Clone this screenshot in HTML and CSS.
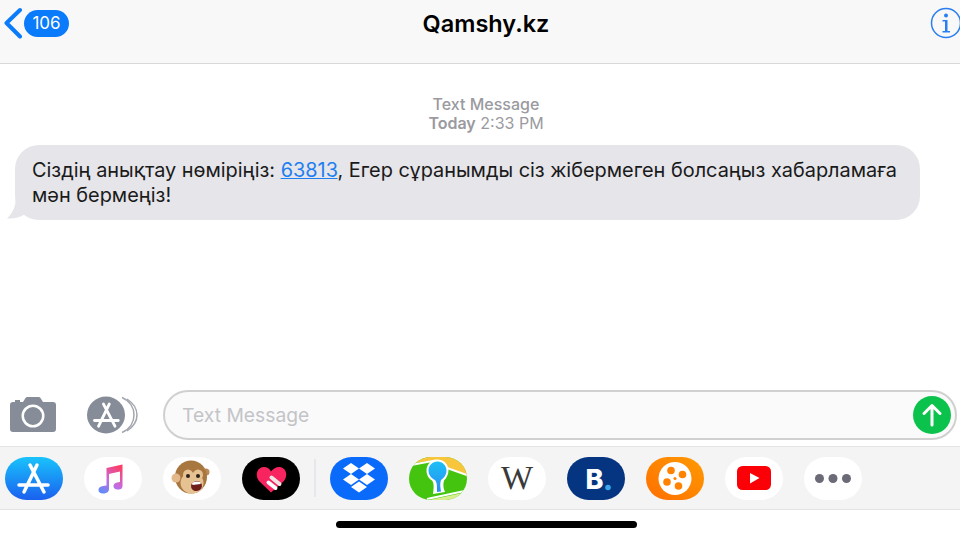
FILE: index.html
```html
<!DOCTYPE html>
<html lang="en">
<head>
<meta charset="UTF-8">
<title>Qamshy.kz</title>
<link rel="stylesheet" href="styles.css">
</head>
<body>

<div class="phone">
    <header class="nav">
        <div class="nav-back">
            <svg class="back-chevron" viewBox="0 0 20 32"><path d="M17 3 L3.500 16 L17 29.500"/></svg>
            <span class="badge">106</span>
        </div>
        <h1 class="nav-title">Qamshy.kz</h1>
        <svg class="info" viewBox="0 0 32 32">
            <circle cx="16" cy="16" r="14.500" class="info-ring"/>
            <circle cx="16" cy="8.500" r="2" class="info-fill"/>
            <path d="M12.500 13 H17.500 V24 H20 V25.500 H12.500 V24 H15 V14.500 H12.500 Z" class="info-fill"/>
        </svg>
    </header>

    <main class="thread">
        <p class="stamp"><span class="stamp-kind">Text Message</span><br><b>Today</b> 2:33 PM</p>
        <div class="bubble">
            Сіздің анықтау нөміріңіз: <a href="#">63813</a>, Егер сұранымды сіз жібермеген болсаңыз хабарламаға мән бермеңіз!
            <svg class="bubble-tail" viewBox="0 0 24 24"><path d="M9 0 C9 10 6 17 0 22.500 C6 23 12 22 18 18 V0 Z"/></svg>
        </div>
    </main>

    <div class="composer">
        <svg class="camera" viewBox="0 0 46 35">
            <path fill-rule="evenodd" d="M3 5 H5 V3 H10 V5 H13 L15.500 1 Q16 0 17.500 0 H28.500 Q30 0 30.500 1 L33 5 H43 Q46 5 46 8 V32 Q46 35 43 35 H3 Q0 35 0 32 V8 Q0 5 3 5 Z M23 7.500 A11.500 11.500 0 1 0 23 30.500 A11.500 11.500 0 1 0 23 7.500 Z M23 10 A9 9 0 1 1 23 28 A9 9 0 1 1 23 10 Z"/>
        </svg>
        <svg class="apps-btn" viewBox="0 0 52 38">
            <path class="apps-echo" d="M35 1.500 C43 5 47 12 47 19 C47 26 43 33 35 36.500"/>
            <path class="apps-echo" d="M40 3 C46 7 50 13 50 19 C50 25 46 31 40 35"/>
            <ellipse cx="19" cy="19" rx="19" ry="18.500" fill="#868d98"/>
            <path class="store-mark" transform="translate(-4 1.500) scale(.82)" d="M25 8 L39 35 M32 8 L19 35 M14 28 H43"/>
        </svg>
        <div class="field">
            <span class="placeholder">Text Message</span>
            <svg class="send" viewBox="0 0 38 38">
                <circle cx="19" cy="19" r="19" fill="#0bc34c"/>
                <path d="M19 29 V9.500 M11 17.500 L19 9.500 L27 17.500" class="send-arrow"/>
            </svg>
        </div>
    </div>

    <nav class="strip">
        <svg class="app" viewBox="0 0 58 43">
            <defs><linearGradient id="storeGrad" x1="0" y1="0" x2="0" y2="1"><stop offset="0" stop-color="#19c3fb"/><stop offset="1" stop-color="#1a60ef"/></linearGradient></defs>
            <rect width="58" height="43" rx="21.500" fill="url(#storeGrad)"/>
            <path class="store-mark" d="M25 8 L39 35 M32 8 L19 35 M14 28 H43"/>
        </svg>
        <svg class="app app-light" viewBox="0 0 58 43">
            <defs><linearGradient id="noteGrad" x1=".7" y1="0" x2=".2" y2="1"><stop offset="0" stop-color="#fb3f68"/><stop offset=".55" stop-color="#c76adf"/><stop offset="1" stop-color="#5d8dfb"/></linearGradient></defs>
            <path fill="url(#noteGrad)" d="M22.500 11 L38.500 7.500 V29 C38.500 32 36 32.500 33.500 32.500 C31 32.500 29.500 31 29.500 29 C29.500 26.500 32 25.500 36 25 V14.500 L25 17 V32 C25 35 22.500 36.500 19 36.500 C16 36.500 14.500 35 14.500 33 C14.500 30 18 28.800 22.500 28.500 Z"/>
        </svg>
        <svg class="app app-light" viewBox="0 0 58 43">
            <circle cx="43" cy="15" r="3.500" fill="#b98a58"/>
            <ellipse cx="28" cy="20" rx="16" ry="16.500" fill="#a8763f"/>
            <circle cx="13" cy="21" r="4.500" fill="#e3b98c"/>
            <ellipse cx="29" cy="26" rx="11.500" ry="10.500" fill="#e6c192"/>
            <ellipse cx="25" cy="18" rx="5" ry="5.500" fill="#e6c192"/>
            <ellipse cx="35" cy="18" rx="5" ry="5.500" fill="#e6c192"/>
            <circle cx="25" cy="19" r="2" fill="#2d2018"/>
            <circle cx="35" cy="19" r="2" fill="#2d2018"/>
            <ellipse cx="33.500" cy="29" rx="5.500" ry="5" fill="#6e1f1c" transform="rotate(-15 33.500 29)"/>
            <path d="M29 26 Q33.500 23.500 38 25.500 L37.500 27 L29.500 28 Z" fill="#fff"/>
        </svg>
        <svg class="app" viewBox="0 0 58 43">
            <rect width="58" height="43" rx="21.500" fill="#000"/>
            <path d="M29 35.500 L17 24 C12 17 16 10 22 10 C25 10 28 12 29 14.500 C31 12 34 10 37 10 C43 10 47 17 42 24 Z" fill="#f8245f"/>
            <path d="M29.500 20.500 L37.500 27" stroke="#f0e4e4" stroke-width="4" stroke-linecap="round"/>
            <path d="M26.500 25.500 L33.500 31" stroke="#fff" stroke-width="4" stroke-linecap="round"/>
        </svg>
        <span class="strip-divider"></span>
        <svg class="app" viewBox="0 0 58 43">
            <rect width="58" height="43" rx="21.500" fill="#0a6bfb"/>
            <path fill="#fff" d="M21 6 L29 11.500 L21 17 L13 11.500 Z M37 6 L45 11.500 L37 17 L29 11.500 Z M21 17 L29 22.500 L21 28 L13 22.500 Z M37 17 L45 22.500 L37 28 L29 22.500 Z M29 24.500 L37 30 L29 35.500 L21 30 Z"/>
        </svg>
        <svg class="app" viewBox="0 0 58 43">
            <defs>
                <clipPath id="mapClip"><rect width="58" height="43" rx="21.500"/></clipPath>
                <linearGradient id="pinGrad" x1="0" y1="0" x2="0" y2="1"><stop offset="0" stop-color="#1cc0f5"/><stop offset="1" stop-color="#2b8df0"/></linearGradient>
            </defs>
            <g clip-path="url(#mapClip)">
                <rect width="58" height="43" fill="#44c40f"/>
                <path d="M6 0 H58 V19 L40 12 L26 3 L6 6 Z" fill="#f8c63c"/>
                <path d="M2 8 L26 3.500 L38 11 L58 18" fill="none" stroke="#fff" stroke-width="2"/>
                <path d="M20 43 L58 35 V43 Z" fill="#d8ef8e"/>
                <path d="M18 42 L58 33.500" stroke="#fff" stroke-width="2"/>
                <path d="M24 37 C25 30 25 26 23 23.500 C19 21 17.500 17 17.500 13.500 C17.500 7 22.500 2.500 28.500 2.500 C34.500 2.500 39.500 7 39.500 13.500 C39.500 17 37.500 21 35 23.500 C34 27 34 31 36 35 Z" fill="#fff"/>
                <path d="M28 35 C28 28 28 25.500 26 23 C22 21 19.500 17.500 19.500 13.500 C19.500 8.500 23.500 4.500 28.500 4.500 C33.500 4.500 37.500 8.500 37.500 13.500 C37.500 17.500 35 21 32 23 C31 26 31 29 32 34.500 Z" fill="url(#pinGrad)"/>
            </g>
        </svg>
        <svg class="app app-light" viewBox="0 0 58 43">
            <text x="29" y="32" class="wiki">W</text>
        </svg>
        <svg class="app" viewBox="0 0 58 43">
            <rect width="58" height="43" rx="21.500" fill="#053580"/>
            <text x="18.500" y="32" class="booking">B</text>
            <circle cx="41" cy="30.500" r="2.800" fill="#3ba6e8"/>
        </svg>
        <svg class="app" viewBox="0 0 58 43">
            <defs><linearGradient id="kinoGrad" x1="0" y1="1" x2="1" y2="0"><stop offset="0" stop-color="#ff6f00"/><stop offset="1" stop-color="#ff9a00"/></linearGradient></defs>
            <rect width="58" height="43" rx="21.500" fill="url(#kinoGrad)"/>
            <circle cx="29" cy="21.500" r="16.500" fill="#fff"/>
            <g fill="#ff8200">
                <circle cx="25" cy="13.500" r="3.800"/>
                <circle cx="36.500" cy="17.500" r="3.800"/>
                <circle cx="21" cy="25" r="3.800"/>
                <circle cx="32.500" cy="29" r="3.800"/>
                <circle cx="29" cy="21.500" r="1.500"/>
            </g>
        </svg>
        <svg class="app app-light" viewBox="0 0 58 43">
            <rect x="12" y="9" width="34" height="24" rx="5.500" fill="#fb0007"/>
            <path d="M25 16 L34.500 21 L25 26.500 Z" fill="#fff"/>
        </svg>
        <svg class="app app-light" viewBox="0 0 58 43">
            <g fill="#6b6b78">
                <circle cx="15.500" cy="21.500" r="4.500"/>
                <circle cx="29" cy="21.500" r="4.500"/>
                <circle cx="42.500" cy="21.500" r="4.500"/>
            </g>
        </svg>
    </nav>

    <div class="home-area">
        <span class="home-bar"></span>
    </div>
</div>

</body>
</html>
```

FILE: styles.css
```css
/* Base */
body {
    margin: 0;
    background: #fff;
    font-family: Inter, "Noto Sans", Roboto, sans-serif;
    color: #111;
}

.phone {
    width: 960px;
    height: 540px;
    display: flex;
    flex-direction: column;
    overflow: hidden;
}

/* Nav bar */
.nav {
    height: 64px;
    flex: none;
    box-sizing: border-box;
    background: #f8f8f8;
    border-bottom: 1px solid #d9d9d9;
    display: flex;
    justify-content: space-between;
    padding: 7px 0 0 3px;
    position: relative;
}

.nav-back {
    display: flex;
    align-items: flex-start;
    gap: 1px;
}

.back-chevron {
    width: 20px;
    height: 32px;
    fill: none;
    stroke: #0a7bfa;
    stroke-width: 4;
    stroke-linecap: round;
    stroke-linejoin: round;
}

.badge {
    background: #0a7bfa;
    color: #fff;
    font-size: 17px;
    line-height: 27px;
    height: 27px;
    width: 45px;
    text-align: center;
    border-radius: 14px;
    margin-top: 3px;
}

.nav-title {
    margin: 3px 0 0 12px;
    font-size: 23.500px;
    line-height: 28px;
    font-weight: 600;
    color: #000;
    position: absolute;
    left: 0;
    right: 0;
    text-align: center;
}

.info {
    width: 32px;
    height: 32px;
    margin-right: -2px;
}

.info-ring {
    fill: none;
    stroke: #2a7ff0;
    stroke-width: 1.500;
}

.info-fill { fill: #2a7ff0; }

/* Messages */
.thread {
    flex: 1;
    min-height: 0;
    padding-top: 31px;
}

.stamp {
    margin: 0 0 13px;
    padding-left: 12px;
    text-align: center;
    font-size: 16px;
    line-height: 18.500px;
    color: #9a9aa0;
}

.stamp b { font-weight: 600; }

.stamp-kind { font-weight: 500; }

.bubble {
    position: relative;
    margin: 0 40px 0 15px;
    background: #e5e5ea;
    border-radius: 24px;
    padding: 13px 17px 12px;
    font-size: 19.900px;
    line-height: 25px;
    color: #1a1a1a;
}

.bubble a { color: #1f7ff0; }

.bubble-tail {
    position: absolute;
    left: -8px;
    bottom: 0;
    width: 24px;
    height: 24px;
    fill: #e5e5ea;
}

/* Composer */
.composer {
    flex: none;
    height: 56px;
    display: flex;
    align-items: flex-start;
    padding-left: 10px;
    box-sizing: border-box;
}

.camera {
    width: 46px;
    height: 35px;
    fill: #868d98;
    margin-top: 7px;
}

.apps-btn {
    width: 52px;
    height: 38px;
    margin: 6px 0 0 31px;
}

.apps-echo {
    fill: none;
    stroke: #a2a6ad;
    stroke-width: 1.500;
}

.store-mark {
    fill: none;
    stroke: #fff;
    stroke-width: 3.500;
    stroke-linecap: round;
}

.field {
    flex: none;
    width: 794px;
    height: 50px;
    margin-left: 24px;
    box-sizing: border-box;
    background: #fafafa;
    border: 2px solid #d0d0d0;
    border-radius: 25px;
    display: flex;
    align-items: center;
    justify-content: space-between;
    padding: 0 4px 0 17px;
}

.placeholder {
    font-size: 19.300px;
    color: #c4c4c8;
}

.send {
    width: 38px;
    height: 38px;
}

.send-arrow {
    fill: none;
    stroke: #fff;
    stroke-width: 3;
    stroke-linecap: round;
    stroke-linejoin: round;
}

/* App strip */
.strip {
    flex: none;
    height: 64px;
    box-sizing: border-box;
    background: #f4f4f4;
    border-top: 1px solid #e3e3e3;
    border-bottom: 1px solid #e3e3e3;
    display: flex;
    align-items: center;
    gap: 21px;
    padding-left: 5px;
}

.app {
    width: 58px;
    height: 43px;
    flex: none;
}

.app-light {
    background: #fff;
    border-radius: 22px;
}

.strip-divider {
    width: 2px;
    height: 38px;
    margin: 0 -7px;
    background: #e6e6ec;
}

.wiki {
    font-family: "Liberation Serif", serif;
    font-size: 34px;
    fill: #3a3a3a;
    text-anchor: middle;
}

.booking {
    font-family: Inter, sans-serif;
    font-size: 27px;
    font-weight: 800;
    fill: #fff;
}

/* Home indicator */
.home-area {
    flex: none;
    height: 30px;
    box-sizing: border-box;
    display: flex;
    justify-content: center;
    padding: 11px 0 0 13px;
}

.home-bar {
    width: 301px;
    height: 7px;
    background: #000;
    border-radius: 4px;
}
```
